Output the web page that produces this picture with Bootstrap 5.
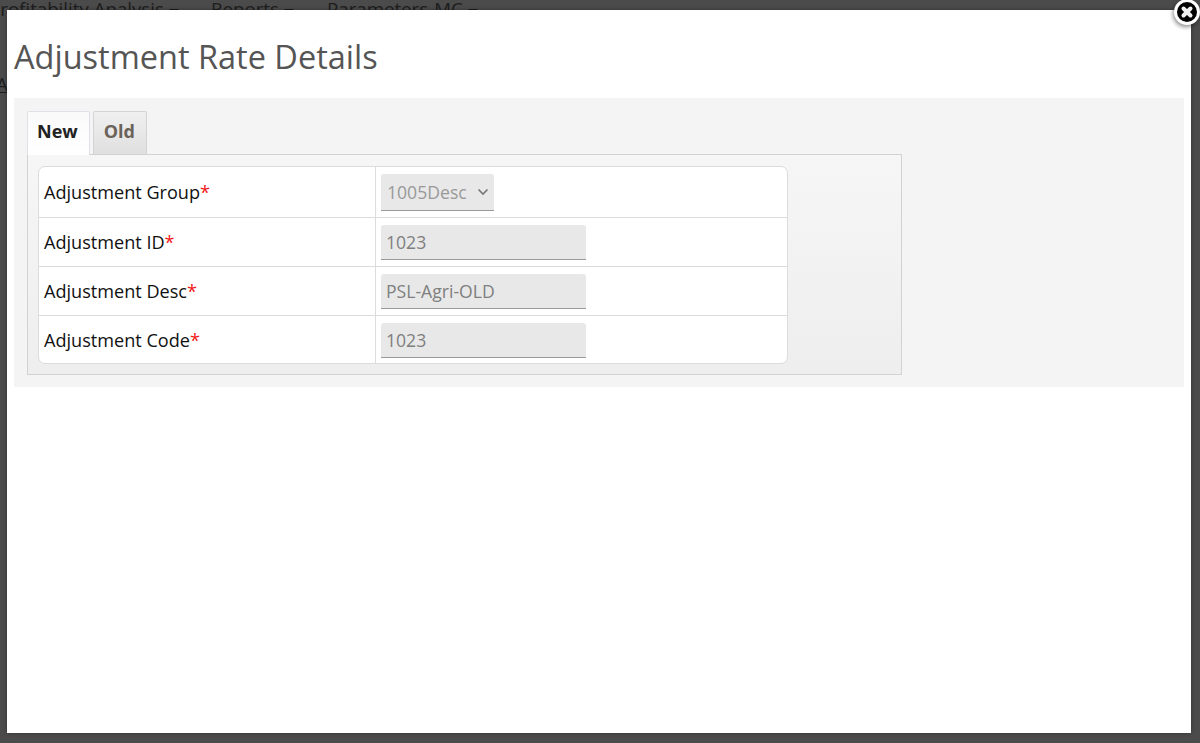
<!DOCTYPE html>
<html lang="en">
  <head>
    <meta charset="utf-8" />
    <title>Adjustment Rate Details</title>
    <link href="https://cdn.jsdelivr.net/npm/bootstrap@5.3.0/dist/css/bootstrap.min.css" rel="stylesheet">
    <script src="https://cdn.jsdelivr.net/npm/bootstrap@5.3.0/dist/js/bootstrap.bundle.min.js"></script>
    <meta name="viewport" content="width=device-width, initial-scale=1">
    <style>
      html, body { height: 100%; }
      body { background: #4b4b4b; font-family: "Open Sans", sans-serif; overflow: hidden; color: #111; }

      /* page that sits behind the overlay */
      .behind-menu { position: absolute; top: -2px; left: -11px; display: flex; font-size: 18.7px; color: #1d1d1d; white-space: nowrap; line-height: 22px; }
      .behind-menu span:nth-child(1) { width: 222px; }
      .behind-menu span:nth-child(2) { width: 116px; }
      .behind-menu .dropdown-toggle::after { vertical-align: .09em; }
      .behind-link { position: absolute; top: 73px; left: -4px; font-size: 18.7px; color: #1d1d1d; text-decoration: underline; line-height: 22px; }

      .popup-wrap { height: 100%; padding: 10px 9px 10px 7px; position: relative; }
      .popup-box { background: #fff; height: 100%; padding: 0 7px; position: relative; box-shadow: 0 0 4px rgba(0,0,0,.35); }
      .popup-close { position: absolute; top: -13px; right: -11px; width: 30px; height: 30px; filter: drop-shadow(-1px 2px 2px rgba(0,0,0,.45)); }
      .popup-title { font-size: 32.5px; font-weight: 400; color: #555; line-height: 44px; margin: 0; padding-top: 25px; height: 88px; }

      .detail-panel { background: #f4f4f4; padding: 13px 13px 12px; height: 289px; }
      .tab-strip { gap: 3px; border: 0; height: 43px; position: relative; z-index: 1; }
      .tab-strip .nav-link { font-size: 18px; font-weight: 700; line-height: 24px; padding: 7px 11px 12px 9.5px; height: 43px; border: 1px solid #d4d4d4; border-bottom: 0; border-radius: 2px 2px 0 0; background: linear-gradient(#f0f0f0, #dfdfdf); color: #6b6259; margin: 0; }
      .tab-strip .nav-link.active { background: linear-gradient(#fafafa, #fff); color: #222; height: 44px; padding-left: 9px; padding-right: 11.5px; }
      .tab-body { width: 875px; height: 221px; border: 1px solid #d2d2d2; background: linear-gradient(#f6f6f6, #eee); padding: 11px 10px; }

      .detail-table { width: 750px; height: 198px; background: #fff; border: 1px solid #dcdcdc; border-radius: 7px; border-collapse: separate; border-spacing: 0; }
      .detail-table td { padding: 0 5px; font-size: 18.1px; line-height: 24px; vertical-align: middle; border-bottom: 1px solid #dcdcdc; }
      .detail-table tr:last-child td { border-bottom: 0; }
      .detail-table tr:last-child .ro-input { margin-top: 2px; }
      .detail-table td:first-child { width: 337px; border-right: 1px solid #dcdcdc; color: #111; }
      .req-star { color: #f01818; }
      .ro-input, .ro-select { font-family: "Open Sans", sans-serif; font-size: 17.6px; color: #7f7f7f; background-color: #e8e8e8; border: 0; border-bottom: 1px solid #9a9a9a; border-radius: 3px 3px 0 0; display: block; opacity: 1; }
      .ro-input { width: 205px; height: 35px; padding: 0 5px; }
      .ro-select { width: 113px; height: 37px; padding: 0 6px; color: #999; appearance: none; background-image: url("data:image/svg+xml,%3Csvg xmlns='http://www.w3.org/2000/svg' width='12' height='8' viewBox='0 0 12 8'%3E%3Cpath d='M1.5 1.5 6 6l4.5-4.5' fill='none' stroke='%23777' stroke-width='1.7'/%3E%3C/svg%3E"); background-repeat: no-repeat; background-position: right 5px center; }
    </style>
  </head>
  <body>
    <div class="behind-menu"><span class="dropdown-toggle">Profitability Analysis</span><span class="dropdown-toggle">Reports</span><span class="dropdown-toggle">Parameters-MC</span></div>
    <div class="behind-link">A</div>

    <div class="popup-wrap">
      <div class="popup-box">
        <svg class="popup-close" viewBox="0 0 30 30">
          <circle cx="15" cy="15" r="13" fill="#fff"/>
          <circle cx="15" cy="15" r="10" fill="#000"/>
          <path d="M11.5 11.5l7 7M18.5 11.5l-7 7" stroke="#f0f0f0" stroke-width="4" stroke-linecap="round"/>
        </svg>

        <h1 class="popup-title">Adjustment Rate Details</h1>

        <div class="detail-panel">
          <ul class="nav nav-tabs tab-strip">
            <li class="nav-item"><a class="nav-link active" href="#">New</a></li>
            <li class="nav-item"><a class="nav-link" href="#">Old</a></li>
          </ul>
          <div class="tab-body">
            <table class="detail-table">
              <tr style="height:51px">
                <td>Adjustment Group<span class="req-star">*</span></td>
                <td><select class="ro-select" disabled><option>1005Desc</option></select></td>
              </tr>
              <tr style="height:49px">
                <td>Adjustment ID<span class="req-star">*</span></td>
                <td><input class="ro-input" type="text" value="1023" disabled></td>
              </tr>
              <tr style="height:49px">
                <td>Adjustment Desc<span class="req-star">*</span></td>
                <td><input class="ro-input" type="text" value="PSL-Agri-OLD" disabled></td>
              </tr>
              <tr style="height:47px">
                <td>Adjustment Code<span class="req-star">*</span></td>
                <td><input class="ro-input" type="text" value="1023" disabled></td>
              </tr>
            </table>
          </div>
        </div>
      </div>
    </div>
  </body>
</html>
